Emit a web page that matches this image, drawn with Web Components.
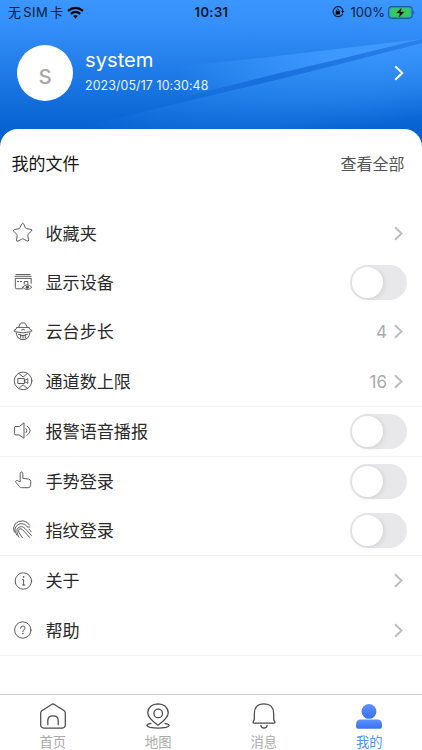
<!DOCTYPE html>
<html lang="zh-CN">
<head>
<meta charset="utf-8">
<title>我的</title>
<style>
  body {
    margin: 0;
    background: #fff;
    font-family: Inter, "Noto Sans CJK SC", sans-serif;
  }
</style>
</head>
<body>
<profile-page></profile-page>

<script>
const icons = {
  star: `<path d="M11.9 2.7Q12.7 1.5 13.5 2.7L15.5 6.9Q15.9 7.6 16.6 7.7L21 8.3Q22.6 8.8 21.5 10L18.2 13.2Q17.6 13.8 17.8 14.6L18.6 18.9Q18.6 20.7 17 20L13.3 18Q12.6 17.7 11.8 18.1L8 20.1Q6.4 20.7 6.5 18.9L7.2 14.7Q7.3 13.9 6.7 13.3L3.9 10.4Q2.8 8.9 4.4 8.5L8.6 7.8Q9.5 7.7 9.8 6.9Z"/>`,
  device: `<path d="M6 3.5h14M5 5.3h16M12.8 17.8H6.8q-1.5 0-1.5-1.5V7.4h15.9v5"/><path d="M7.4 10.5h1.2m1.7 0h1.2M14.2 13.2v-2.7h3.6v2.7"/><path d="M12.7 16.3q4.3-5.2 9.2 0-4.9 4.6-9.2 0Z" fill="#fff"/><circle cx="17.3" cy="16.2" r="1.2" fill="#555"/>`,
  dome: `<path d="M8.6 7.2 10.2 3.8q.3-.9 1.3-.9h2.7q1 0 1.3.9l1.7 3.4M6.9 7.5 5.2 10.2M18.9 7.5l1.8 2.7M7 7.4h11.8M11.5 9.9l1.5-.8 1.5.8M5.1 9.4l-.9 1.2q-.5.7.5 1 8.3 2.6 16.5 0 1-.3.5-1l-.9-1.2M6.2 12.8q.7 6.9 6.8 6.9t6.8-6.9M8.5 14.4h2.2v3.8M17.5 14.4h-2.2v3.8M10.7 15.4h4.6M13 15.4v2.8"/>`,
  channel: `<circle cx="13.1" cy="11.9" r="8.8"/><path d="M8.8 4.4 13.1 8l4.3-3.6M8.8 19.4l4.3-3.6 4.3 3.6M8.2 9.6h6.2v4.9H8.2ZM14.6 11.4l3.2-1.7v4.7l-3.2-1.7"/>`,
  speaker: `<path d="M14 4.2v15L9 15.9H5.8q-1.4 0-1.4-1.3V8.8q0-1.3 1.4-1.3H9ZM16 9.5q2.2 2.1 0 4.3M17 7q6.4 4.5 0 9.4"/>`,
  hand: `<path d="M10.2 12.4V4.8q0-1.8 1.3-1.8t1.3 1.8v4.5l5.8.8q2.3.4 2.2 2.7l-.2 3.6q-.2 2.3-2.4 2.3h-6.6q-1.4 0-2.2-1.1L6 13.4q-1-1.4.4-1.9 1-.4 1.8.4Z"/>`,
  fingerprint: `<path d="M4.2 14.2q-1.8-4.8.8-8.1 3.1-3.7 8-3.2 4.3.4 6.7 4.2M6.8 17.1q-3.4-5.7-.6-8.8 3.4-4 8.3-1.9 2 .9 3.7 3.4M8.8 19.1Q5.2 12.2 8.1 9.9q3.4-2.9 7 .7l6.4 7M12.4 19.7 9 14.5q-1.4-2.3.3-3.4 1.6-1.1 3.3.6l6.9 7.6M18.7 8.1l1 1.2M19.1 11.2l2.2 2.7"/>`,
  info: `<circle cx="13.4" cy="12" r="8.2"/><path d="M12.6 10.5h1v5.4M12.4 16h2.4"/><circle cx="13.4" cy="8" r=".4" fill="#555"/>`,
  help: `<circle cx="12.8" cy="12" r="8.2"/><path d="M10.6 10.2q.1-2.2 2.2-2.2t2.2 1.9q0 1.1-1.1 1.9-1.1.8-1.1 1.9"/><circle cx="12.8" cy="15.6" r=".3"/>`,
  home: `<path d="M13.6 2.5q1.4-1 2.8 0l9.8 6.3q1.1.8 1.1 2.1v11.9q0 3.2-3.2 3.2H5.9q-3.2 0-3.2-3.2V10.9q0-1.3 1.1-2.1ZM9.8 22.7v-4.2q0-4.6 5.2-4.6t5.2 4.6v4.2"/>`,
  map: `<path d="M15 23.3Q4.7 16.1 4.7 10.6q1-8.6 10.3-8.8 9.3.2 10.3 8.8 0 5.5-10.3 12.7Z"/><circle cx="15.2" cy="11.4" r="4.3"/><path d="M8 21.4q-7.8 1.8-1 3.9 8 1.5 16 0 6.8-2.1-1-3.9"/>`,
  bell: `<path d="M5.3 17.5v-5.7Q5.3 1.9 15 1.9t9.7 9.9v5.7l1.2 2.7q.2.8-.7.8H4.8q-.9 0-.7-.8ZM11.8 23.4q.4 2.6 3.2 2.6t3.2-2.6"/>`,
  user: `<defs><linearGradient id="fill" x2="0" y2="1"><stop stop-color="#6391ff"/><stop offset="1" stop-color="#3372f0"/></linearGradient></defs><g fill="url(#fill)" stroke="none"><circle cx="15" cy="9.4" r="7.4"/><path d="M2 22.4q0-4.9 5-4.9h16q5 0 5 4.9v2q0 2.3-2.3 2.3H4.3Q2 26.7 2 24.4Z"/></g>`
};

class LineIcon extends HTMLElement {
  connectedCallback() {
    const size = this.getAttribute("size") || 24;
    this.attachShadow({ mode: "open" });
    this.shadowRoot.innerHTML = `
      <style>
        :host { display: block; width: ${size}px; height: ${size}px; }
        svg { display: block; fill: none; stroke: #4b4b4b; stroke-linecap: round; stroke-linejoin: round; }
      </style>
      <svg width="${size}" height="${size}" viewBox="0 0 ${size} ${size}" stroke-width="${size > 24 ? 1.25 : 0.9}">
        ${icons[this.getAttribute("name")]}
      </svg>
    `;
  }
}

class ChevronRight extends HTMLElement {
  connectedCallback() {
    this.attachShadow({ mode: "open" });
    this.shadowRoot.innerHTML = `
      <style>
        :host { display: block; color: #bdbdc0; width: 9px; height: 15px; }
        svg { display: block; width: 100%; height: 100%; }
      </style>
      <svg viewBox="0 0 9 15"><path d="M1 1.2 7.5 7.5 1 13.8" fill="none" stroke="currentColor" stroke-width="1.9"/></svg>
    `;
  }
}

class ToggleSwitch extends HTMLElement {
  connectedCallback() {
    this.attachShadow({ mode: "open" });
    this.shadowRoot.innerHTML = `
      <style>
        :host {
          background: #e8e8ea;
          border-radius: 18px;
          box-sizing: border-box;
          display: flex;
          height: 35px;
          padding: 2px;
          width: 57px;
        }
        span {
          background: #fff;
          border-radius: 50%;
          box-shadow: 1px 1px 5px rgba(0, 0, 0, 0.1);
          height: 31px;
          width: 31px;
        }
      </style>
      <span></span>
    `;
  }
}

class StatusBar extends HTMLElement {
  connectedCallback() {
    this.attachShadow({ mode: "open" });
    this.shadowRoot.innerHTML = `
      <style>
        :host {
          color: #06203f;
          display: grid;
          font-size: 13px;
          grid-template-columns: 1fr auto 1fr;
          height: 24px;
          line-height: 24px;
          padding: 0 7px 0 8px;
        }
        div { align-items: center; display: flex; }
        .carrier { letter-spacing: 0.35px; white-space: pre; }
        .latin { margin: 0 2px; }
        .wifi { margin-left: 4px; }
        .time { color: #04152b; font-weight: 600; letter-spacing: 0.4px; }
        .power { justify-content: flex-end; }
        .lock { margin-right: 6px; }
        .battery { margin-left: 3px; }
      </style>
      <div><span class="carrier">无<span class="latin">SIM</span>卡</span>
        <svg class="wifi" width="17" height="13" viewBox="0 0 17 13"><path d="M1 4.9q7.5-6 15 0M3.8 7.8q4.7-3.7 9.4 0" fill="none" stroke="#000" stroke-width="2.1"/><path d="m8.5 12.4-2.4-2.5q2.4-1.8 4.8 0Z"/></svg>
      </div>
      <div class="time">10:31</div>
      <div class="power">
        <svg class="lock" width="13" height="12" viewBox="0 0 13 12"><path d="M9.5 1.9A5 5 0 1 0 10.8 7.7M10.9 5.4A5 5 0 0 0 8.9 1.6" fill="none" stroke="#06203f" stroke-width="1.2"/><path d="m9 5 3.5 0-1.8 2.3ZM3.7 5.3h4.2v3.2H3.7Z"/><path d="M4.6 5.5V4q1.2-1.8 2.4 0v1.5" fill="none" stroke="#000" stroke-width=".8"/></svg>
        <span>100%</span>
        <svg class="battery" width="27" height="13" viewBox="0 0 27 13"><rect x=".6" y=".6" width="23.6" height="11.8" rx="3.3" fill="none" stroke="#1f5b91" stroke-width="1.1"/><rect x="2.2" y="2.2" width="20.4" height="8.6" rx="1.9" fill="#35ca5c"/><path d="M25.3 4.5q2 2 0 4Z" fill="#1f5b91"/><path d="m14 .9-6 6.4h3.7l-1.4 5 6.4-6.6h-3.9Z" stroke="#38b978" stroke-width=".6"/></svg>
      </div>
    `;
  }
}

class ProfileHeader extends HTMLElement {
  connectedCallback() {
    this.attachShadow({ mode: "open" });
    this.shadowRoot.innerHTML = `
      <style>
        :host {
          background: linear-gradient(#3b96ff 0, #348ffa 25px, #0662d0 130px);
          display: block;
          height: 150px;
          isolation: isolate;
          position: relative;
        }
        .rays { inset: 0; position: absolute; z-index: -1; }
        .user { align-items: center; display: flex; padding: 21px 18px 0 17px; }
        .avatar {
          background: #fff;
          border-radius: 50%;
          color: #aaa;
          font-size: 26px;
          height: 56px;
          line-height: 60px;
          text-align: center;
          width: 56px;
        }
        .info { color: #fff; flex: 1; margin: -5px 0 0 12px; }
        .name { font-size: 20.2px; line-height: 26px; }
        .date { color: #e7f2ff; font-size: 12.4px; letter-spacing: 0.1px; line-height: 16px; margin-top: 5px; }
        chevron-right { color: #fff; height: 16px; width: 10px; }
      </style>
      <svg class="rays" width="422" height="150">
        <defs>
          <linearGradient id="beam" gradientUnits="userSpaceOnUse" x1="180" x2="340"><stop stop-color="#3d99ff" stop-opacity="0"/><stop offset=".65" stop-color="#3d99ff" stop-opacity=".7"/><stop offset="1" stop-color="#3d99ff"/></linearGradient>
          <linearGradient id="glow" gradientUnits="userSpaceOnUse" x1="345" y1="55" x2="360" y2="130"><stop stop-color="#3d99ff" stop-opacity=".85"/><stop offset="1" stop-color="#3d99ff" stop-opacity="0"/></linearGradient>
          <linearGradient id="fade" gradientUnits="userSpaceOnUse" x1="85" x2="380"><stop stop-color="#fff" stop-opacity="0"/><stop offset="1" stop-color="#fff"/></linearGradient>
          <linearGradient id="shade" gradientUnits="userSpaceOnUse" x1="170" x2="422"><stop stop-color="#1267d5" stop-opacity="0"/><stop offset=".35" stop-color="#1469d8" stop-opacity=".55"/><stop offset="1" stop-color="#2a80ec" stop-opacity=".9"/></linearGradient>
          <mask id="edge"><rect width="422" height="150" fill="url(#fade)"/></mask>
        </defs>
        <path d="M180 66 260 58 422 39 340 59 280 73 180 98Z" fill="url(#beam)"/>
        <path d="M85 126 200 98 280 79 340 64 422 43V150H85Z" fill="url(#glow)" mask="url(#edge)"/>
        <path d="M170 100.500 280 73 340 59 422 39V43L340 64 280 79 170 105Z" fill="url(#shade)"/>
      </svg>
      <status-bar></status-bar>
      <div class="user">
        <div class="avatar">s</div>
        <div class="info">
          <div class="name">system</div>
          <div class="date">2023/05/17 10:30:48</div>
        </div>
        <chevron-right></chevron-right>
      </div>
    `;
  }
}

class MenuGroup extends HTMLElement {
  connectedCallback() {
    this.attachShadow({ mode: "open" });
    this.shadowRoot.innerHTML = `
      <style>
        :host { border-bottom: 1px solid #f4f4f5; display: block; }
      </style>
      <slot></slot>
    `;
  }
}

class MenuRow extends HTMLElement {
  connectedCallback() {
    this.attachShadow({ mode: "open" });
    this.shadowRoot.innerHTML = `
      <style>
        :host {
          align-items: center;
          display: flex;
          height: var(--row-height, 49.5px);
          padding: 0 15px 0 10px;
        }
        .label { color: #2a2a2a; flex: 1; font-size: 17.1px; line-height: 24px; margin: 1px 0 0 11.5px; }
        .value { color: #aaaaad; font-size: 17px; margin: 1px 7px 0 0; }
        chevron-right { margin-right: 4px; }
      </style>
      <line-icon name="${this.getAttribute("icon")}"></line-icon>
      <span class="label"><slot></slot></span>
      ${this.hasAttribute("toggle")
        ? "<toggle-switch></toggle-switch>"
        : `<span class="value">${this.getAttribute("value") || ""}</span><chevron-right></chevron-right>`}
    `;
  }
}

class TabItem extends HTMLElement {
  connectedCallback() {
    this.attachShadow({ mode: "open" });
    this.shadowRoot.innerHTML = `
      <style>
        :host {
          align-items: center;
          color: #aaa;
          display: flex;
          flex: 1;
          flex-direction: column;
          font-size: 13.3px;
          line-height: 18px;
          padding-top: 7px;
        }
        :host([active]) { color: #4b96f8; }
        span { margin-top: 1px; }
      </style>
      <line-icon name="${this.getAttribute("icon")}" size="30"></line-icon>
      <span><slot></slot></span>
    `;
  }
}

class ProfilePage extends HTMLElement {
  connectedCallback() {
    this.attachShadow({ mode: "open" });
    this.shadowRoot.innerHTML = `
      <style>
        :host { display: flex; flex-direction: column; height: 750px; overflow: hidden; width: 422px; }
        main {
          background: #fff;
          border-radius: 18px 18px 0 0;
          flex: 1;
          margin-top: -21px;
          z-index: 1;
        }
        .files {
          align-items: center;
          box-sizing: border-box;
          color: #151515;
          display: flex;
          font-size: 17px;
          height: 69px;
          justify-content: space-between;
          line-height: 24px;
          margin-bottom: 10.6px;
          padding: 0 17.5px 0 11.5px;
        }
        .all { color: #555; font-size: 16px; }
        nav { border-top: 1px solid #cfcfd1; box-sizing: border-box; display: flex; height: 56px; }
      </style>
      <profile-header></profile-header>
      <main>
        <div class="files"><span>我的文件</span><span class="all">查看全部</span></div>
        <menu-group style="--row-height: 49.35px">
          <menu-row icon="star">收藏夹</menu-row>
          <menu-row icon="device" toggle>显示设备</menu-row>
          <menu-row icon="dome" value="4">云台步长</menu-row>
          <menu-row icon="channel" value="16">通道数上限</menu-row>
        </menu-group>
        <menu-group style="--row-height: 49px">
          <menu-row icon="speaker" toggle>报警语音播报</menu-row>
        </menu-group>
        <menu-group style="--row-height: 49px">
          <menu-row icon="hand" toggle>手势登录</menu-row>
          <menu-row icon="fingerprint" toggle>指纹登录</menu-row>
        </menu-group>
        <menu-group>
          <menu-row icon="info">关于</menu-row>
          <menu-row icon="help">帮助</menu-row>
        </menu-group>
      </main>
      <nav>
        <tab-item icon="home">首页</tab-item>
        <tab-item icon="map">地图</tab-item>
        <tab-item icon="bell">消息</tab-item>
        <tab-item icon="user" active>我的</tab-item>
      </nav>
    `;
  }
}

customElements.define("line-icon", LineIcon);
customElements.define("chevron-right", ChevronRight);
customElements.define("toggle-switch", ToggleSwitch);
customElements.define("status-bar", StatusBar);
customElements.define("profile-header", ProfileHeader);
customElements.define("menu-group", MenuGroup);
customElements.define("menu-row", MenuRow);
customElements.define("tab-item", TabItem);
customElements.define("profile-page", ProfilePage);
</script>
</body>
</html>
